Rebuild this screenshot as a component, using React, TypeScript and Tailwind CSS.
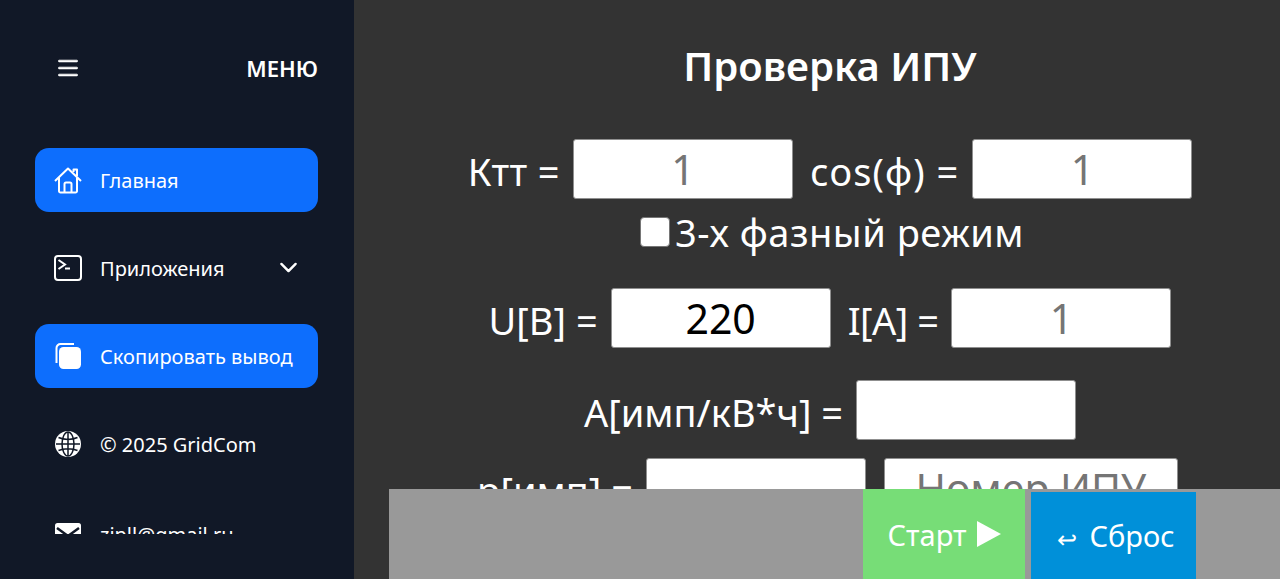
import { BsChevronDown, BsList } from 'react-icons/bs';

const HomeIcon = () => (
  <svg width="28" height="28" viewBox="0 0 28 28" fill="none" stroke="white" strokeWidth="2" strokeLinejoin="round">
    <path d="M1 15 14 2.5 27 15" />
    <path d="M19.5 6V3.5h3.5V10" />
    <path d="M5 11.5V25a1.5 1.5 0 0 0 1.5 1.5h15A1.5 1.5 0 0 0 23 25V11.5" />
    <path d="M10.5 26.5V18a1.5 1.5 0 0 1 1.5-1.5h4a1.5 1.5 0 0 1 1.5 1.5v8.5" />
  </svg>
);

const TerminalIcon = () => (
  <svg width="28" height="28" viewBox="0 0 28 28" fill="none" stroke="white" strokeWidth="2">
    <rect x="1" y="2" width="26" height="24" rx="3" />
    <path d="M4.5 6 11 10.5 4.5 15" />
    <path d="M11 14.5h5" />
  </svg>
);

const CopyIcon = () => (
  <svg width="28" height="28" viewBox="0 0 28 28" fill="none">
    <path d="M2.5 21V6a4 4 0 0 1 4-4H20" stroke="white" strokeWidth="2" />
    <rect x="5" y="5" width="22" height="22" rx="4.5" fill="white" />
  </svg>
);

const GlobeIcon = () => (
  <svg width="28" height="28" viewBox="0 0 28 28" fill="none" stroke="#111827" strokeWidth="1.5">
    <circle cx="14" cy="14" r="13" fill="white" stroke="none" />
    <ellipse cx="14" cy="14" rx="6" ry="12" />
    <path d="M14 2v24M2 14h24M4.5 7.5c5.5 2.5 13.5 2.5 19 0M4.5 20.5c5.5-2.5 13.5-2.5 19 0" />
  </svg>
);

const MailIcon = () => (
  <svg width="28" height="28" viewBox="0 0 28 28" fill="none">
    <rect x="1" y="5" width="26" height="20" rx="2.5" fill="white" />
    <path d="M3 10 14 18 25 10" stroke="#111827" strokeWidth="2.5" />
  </svg>
);

const Field = ({ placeholder, value, wide }: { placeholder?: string; value?: string; wide?: boolean }) => (
  <input
    readOnly
    value={value}
    placeholder={placeholder}
    className={`h-[60px] ${wide ? 'w-[294px]' : 'w-[220px]'} rounded-[3px] border border-[#8f8f8f] bg-white pt-[2px] text-center text-[41px] text-black placeholder:text-[#757575]`}
  />
);

const MenuItem = ({ active, icon, label, chevron, low }: { active?: boolean; icon: React.ReactNode; label: string; chevron?: boolean; low?: boolean }) => (
  <div className={`flex h-[64px] shrink-0 items-center rounded-[14px] pl-[19px] pr-[20px] text-[20px] text-white ${active ? 'bg-[#0d6efd]' : ''}`}>
    <span className="flex w-[28px] justify-center">{icon}</span>
    <span className={`ml-[18px] flex-1 whitespace-nowrap ${low ? 'translate-y-[3px]' : 'translate-y-[1px]'}`}>{label}</span>
    {chevron && <BsChevronDown className="-translate-y-[1px] stroke-[1px] text-[19px]" />}
  </div>
);

export default function App() {
  return (
    <div className="relative flex h-[579px] w-full overflow-hidden bg-[#333333] font-['Noto_Sans',sans-serif] text-white">
      <aside className="w-[354px] shrink-0 bg-[#111827]">
        <div className="flex h-[136px] items-center justify-between pl-[54px] pr-[36px]">
          <BsList className="stroke-[0.4px] text-[28px]" />
          <span className="text-[22px] font-semibold">МЕНЮ</span>
        </div>
        <div className="ml-[35px] mr-[36px] mt-[12px] flex h-[386px] flex-col gap-[24px] overflow-hidden">
          <MenuItem active icon={<HomeIcon />} label="Главная" />
          <MenuItem icon={<TerminalIcon />} label="Приложения" chevron />
          <MenuItem active icon={<CopyIcon />} label="Скопировать вывод" />
          <MenuItem icon={<GlobeIcon />} label="© 2025 GridCom" />
          <MenuItem icon={<MailIcon />} label="zipll@gmail.ru" low />
        </div>
      </aside>

      <main className="flex-1 overflow-hidden pl-[26px]">
        <h1 className="mt-[35px] h-[62px] text-center text-[40px] font-semibold leading-[62px]">Проверка ИПУ</h1>
        <div className="mt-[42px] flex flex-col items-center text-[38px]">
          <div className="flex items-center gap-[13px]">
            <span className="translate-y-[2px] tracking-[0.4px]">Ктт =</span>
            <Field placeholder="1" />
            <span className="ml-[4px] translate-y-[2px] tracking-[1px]">cos(φ) =</span>
            <Field placeholder="1" />
          </div>
          <div className="mt-[17px] flex h-[32px] items-center gap-[5px] pl-[4px]">
            <span className="h-[30px] w-[30px] rounded-[4px] border border-[#767676] bg-white" />
            <span className="tracking-[0.5px]">3-х фазный режим</span>
          </div>
          <div className="mt-[40px] flex items-center gap-[13px]">
            <span className="translate-y-[2px]">U[B] =</span>
            <Field value="220" />
            <span className="ml-[4px] translate-y-[2px] tracking-[-0.5px]">I[A] =</span>
            <Field placeholder="1" />
          </div>
          <div className="mt-[32px] flex items-center gap-[13px]">
            <span className="translate-y-[2px]">A[имп/кВ*ч] =</span>
            <Field />
          </div>
          <div className="mt-[18px] flex items-center gap-[13px] pr-[5px]">
            <span className="translate-y-[2px]">p[имп] =</span>
            <Field />
            <div className="ml-[5px]">
              <Field placeholder="Номер ИПУ" wide />
            </div>
          </div>
        </div>
      </main>

      <div className="absolute bottom-0 left-[389px] right-0 flex h-[90px] items-end bg-[#999999] pl-[474px] text-[29px]">
        <button className="flex h-[90px] w-[162px] items-center justify-center gap-[10px] bg-[#77dd77]">
          <span className="translate-y-[1px]">Старт</span>
          <svg width="24" height="26" viewBox="0 0 24 26" fill="white"><path d="M0 0 24 13 0 26z" /></svg>
        </button>
        <button className="ml-[6px] flex h-[87px] w-[165px] items-center justify-center gap-[12px] bg-[#0090d9] pl-[5px]">
          <span className="translate-y-[3px] text-[24px]">↩</span>
          Сброс
        </button>
      </div>
    </div>
  );
}
